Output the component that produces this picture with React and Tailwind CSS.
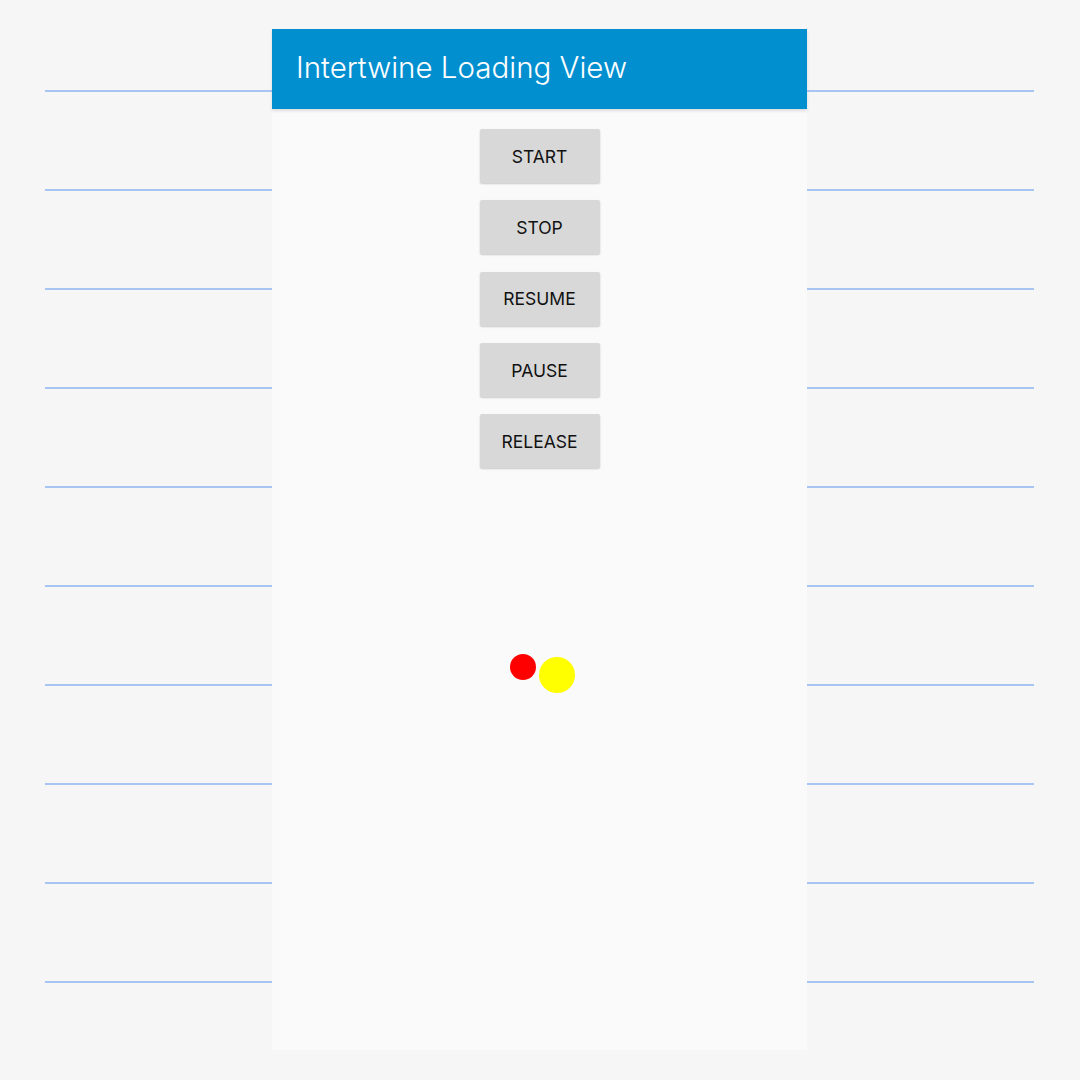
const BUTTONS = ['START', 'STOP', 'RESUME', 'PAUSE', 'RELEASE'];

function RuledColumn() {
  return (
    <div className="w-[227px] pt-[61px] flex flex-col gap-[97px]">
      {Array.from({ length: 10 }, (_, i) => (
        <div key={i} className="h-[2px] bg-[#a6c5f2]" />
      ))}
    </div>
  );
}

function LoadingDots() {
  return (
    <div className="relative h-[80px] w-full">
      <div className="absolute left-[238px] top-[0px] w-[26px] h-[26px] rounded-full bg-[#ff0000]" />
      <div className="absolute left-[267px] top-[3px] w-[36px] h-[36px] rounded-full bg-[#ffff00]" />
    </div>
  );
}

export default function App() {
  return (
    <div
      className="w-[1080px] h-[1080px] bg-[#f6f6f6] flex pt-[29px] pl-[45px]"
      style={{ fontFamily: 'Inter, Roboto, "Noto Sans", sans-serif' }}
    >
      <RuledColumn />
      <div className="w-[535px] h-[1021px] bg-[#fafafa] flex flex-col">
        <div className="h-[80px] pb-[3px] bg-[#028fd0] shadow-[0_2px_3px_rgba(0,0,0,0.12)] flex items-center pl-[24px]">
          <h1 className="text-white text-[29.5px] font-light">Intertwine Loading View</h1>
        </div>
        <div className="flex flex-col items-center gap-[17.25px] pt-[20px]">
          {BUTTONS.map((label) => (
            <button
              key={label}
              className="w-[120px] h-[54px] pt-[2px] bg-[#d7d8d7] rounded-[2px] shadow-[0_1px_2px_rgba(0,0,0,0.2)] text-[17.5px] text-[#111]"
            >
              {label}
            </button>
          ))}
        </div>
        <div className="mt-[186px]">
          <LoadingDots />
        </div>
      </div>
      <RuledColumn />
    </div>
  );
}
